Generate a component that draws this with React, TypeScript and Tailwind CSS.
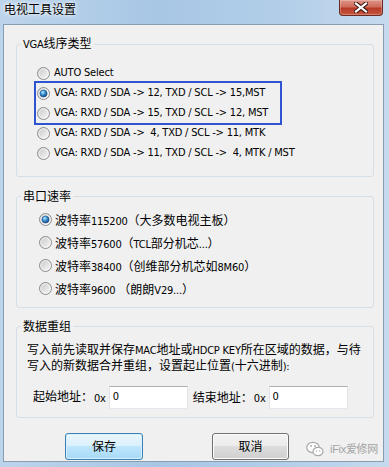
import { useId } from "react";

const CJK = /[\u2e80-\u9fff\u3000-\u303f\uff00-\uffef]/;

// CJK runs at 12px, Latin runs in a narrow Tahoma-like face at 11px
function Mixed({ text }: { text: string }) {
  const parts = text.split(/([\u2e80-\u9fff\u3000-\u303f\uff00-\uffef]+)/);
  return (
    <>
      {parts.map((p, i) =>
        p === "" ? null : CJK.test(p) ? (
          <span key={i} className="text-[12px]">
            {p}
          </span>
        ) : (
          <span
            key={i}
            className="whitespace-pre font-['DejaVu_Sans_Condensed','Liberation_Sans',sans-serif] text-[11px] tracking-[-0.2px]"
          >
            {p}
          </span>
        )
      )}
    </>
  );
}

function Radio({ checked = false }: { checked?: boolean }) {
  const id = useId().replace(/[^a-zA-Z0-9]/g, "");
  return (
    <svg width="13" height="13" viewBox="0 0 13 13" className="shrink-0">
      <defs>
        <linearGradient id={`${id}b`} x1="0" y1="0" x2="1" y2="1">
          <stop offset="0" stopColor="#c4c5c5" />
          <stop offset="1" stopColor="#fbfbfb" />
        </linearGradient>
        <radialGradient id={`${id}d`} cx="0.4" cy="0.35" r="0.7">
          <stop offset="0" stopColor="#bdeeff" />
          <stop offset="0.45" stopColor="#3b92d6" />
          <stop offset="1" stopColor="#0d3a6c" />
        </radialGradient>
      </defs>
      <circle cx="6.5" cy="6.5" r="6" fill={`url(#${id}b)`} stroke="#8b8c8c" />
      <circle cx="6.5" cy="6.5" r="4.7" fill="none" stroke="#f6f6f6" strokeWidth="0.8" />
      {checked && (
        <circle cx="6.5" cy="6.5" r="3.6" fill={`url(#${id}d)`} stroke="#1d4c82" strokeWidth="0.5" />
      )}
    </svg>
  );
}

function Group({
  title,
  className,
  children,
}: {
  title: string;
  className: string;
  children: React.ReactNode;
}) {
  return (
    <fieldset className={`ml-[12px] w-[358px] rounded-[3px] border border-[#d5dfe5] px-0 ${className}`}>
      <legend className="ml-[4px] px-[2px] leading-[16px] text-black">
        <Mixed text={title} />
      </legend>
      {children}
    </fieldset>
  );
}

const vgaItems = [
  "AUTO Select",
  "VGA: RXD / SDA -> 12, TXD / SCL -> 15,MST",
  "VGA: RXD / SDA -> 15, TXD / SCL -> 12, MST",
  "VGA: RXD / SDA ->  4, TXD / SCL -> 11, MTK",
  "VGA: RXD / SDA -> 11, TXD / SCL ->  4, MTK / MST",
];

const baudItems = [
  "波特率115200（大多数电视主板）",
  "波特率57600（TCL部分机芯...）",
  "波特率38400（创维部分机芯如8M60）",
  "波特率9600 （朗朗V29...）",
];

function AddrInput() {
  return (
    <div className="flex h-[23px] w-[79px] items-center border border-[#e2e3ea] border-t-[#abadb3] border-b-[#e3e9ef] bg-white pl-[3px]">
      <Mixed text="0" />
    </div>
  );
}

export default function App() {
  return (
    <div className="relative h-[467px] w-[389px] overflow-hidden bg-[linear-gradient(90deg,#bcd4eb_0%,#a8c7e5_40%,#b1cde8_70%,#c5daee_100%)] font-['Liberation_Sans','Noto_Sans_CJK_SC',sans-serif] text-black">
      {/* title bar */}
      <div className="flex h-[24px] items-start justify-between">
        <div className="pl-[4px] text-[12px] leading-[20px] [text-shadow:0_0_6px_#ffffff,0_0_3px_#ffffff]">
          电视工具设置
        </div>
        <div className="mr-[6px] flex h-[16px] w-[44px] items-center justify-center rounded-b-[4px] border border-t-0 border-[#6b2a20] bg-[linear-gradient(to_bottom,#dd9487_0%,#cf6c5c_45%,#b73a29_55%,#c8573f_100%)] shadow-[inset_0_0_0_1px_rgba(255,255,255,0.25)]">
          <svg width="14" height="11" viewBox="0 0 14 11">
            <path d="M2 1.5 L12 9.5 M12 1.5 L2 9.5" stroke="#3b1711" strokeWidth="4.2" strokeLinecap="square" />
            <path d="M2 1.5 L12 9.5 M12 1.5 L2 9.5" stroke="#ffffff" strokeWidth="2.2" strokeLinecap="square" />
          </svg>
        </div>
      </div>

      {/* client area */}
      <div className="ml-[3px] flex h-[438px] w-[381px] flex-col border border-[#8a9cb0] bg-[#f0f0f0]">
        <Group title="VGA线序类型" className="mt-[10px]">
          <div className="pt-[10px] pb-[13px] pl-[20px]">
            {vgaItems.map((t, i) => (
              <div key={i} className="flex h-[20px] items-center gap-[4px]">
                <Radio checked={i === 1} />
                <Mixed text={t} />
              </div>
            ))}
          </div>
        </Group>

        <Group title="串口速率" className="mt-[11px]">
          <div className="pt-[3px] pb-[7px] pl-[22px]">
            {baudItems.map((t, i) => (
              <div key={i} className="flex h-[23px] items-center gap-[3px]">
                <Radio checked={i === 0} />
                <span>
                  <Mixed text={t} />
                </span>
              </div>
            ))}
          </div>
        </Group>

        <Group title="数据重组" className="mt-[10px]">
          <div className="pt-[7px] pb-[8px]">
            <div className="pl-[10px] leading-[14px]">
              <div>
                <Mixed text="写入前先读取并保存MAC地址或HDCP KEY所在区域的数据，与待" />
              </div>
              <div>
                <Mixed text="写入的新数据合并重组，设置起止位置(十六进制):" />
              </div>
            </div>
            <div className="mt-[11px] flex items-center pl-[16px]">
              <Mixed text="起始地址：" />
              <span className="ml-[1px] mr-[3px]">
                <Mixed text="0x" />
              </span>
              <AddrInput />
              <span className="ml-[5px]">
                <Mixed text="结束地址：" />
              </span>
              <span className="ml-[1px] mr-[3px]">
                <Mixed text="0x" />
              </span>
              <AddrInput />
            </div>
          </div>
        </Group>

        <div className="mt-[15px] flex">
          <button className="ml-[61px] h-[27px] w-[78px] rounded-[3px] border border-[#3c7fb1] bg-[linear-gradient(to_bottom,#eaf6fd_0%,#d9f0fc_50%,#bee6fd_50%,#a7d9f5_100%)] text-[12px] shadow-[inset_0_0_0_1px_#d6f1ff]">
            保存
          </button>
          <button className="ml-[69px] h-[27px] w-[77px] rounded-[3px] border border-[#707070] bg-[linear-gradient(to_bottom,#f2f2f2_0%,#ebebeb_50%,#dddddd_50%,#cfcfcf_100%)] text-[12px] shadow-[inset_0_0_0_1px_#fcfcfc]">
            取消
          </button>
        </div>
      </div>

      {/* annotation box */}
      <div className="absolute left-[34px] top-[81px] h-[44px] w-[248px] border-2 border-[#2e54d2]" />

      {/* watermark */}
      <div className="absolute left-[306px] top-[441px] flex items-center gap-[6px] text-[#a3a3a3]">
        <svg width="18" height="16" viewBox="0 0 18 16">
          <ellipse cx="7" cy="6.5" rx="6.2" ry="5.2" fill="#ffffff" stroke="#a8a8a8" strokeWidth="1.2" />
          <ellipse cx="12" cy="10.5" rx="5" ry="4.2" fill="#ffffff" stroke="#a8a8a8" strokeWidth="1.2" />
          <circle cx="5" cy="5" r="0.9" fill="#a8a8a8" />
          <circle cx="9" cy="5" r="0.9" fill="#a8a8a8" />
          <circle cx="10.5" cy="10" r="0.7" fill="#a8a8a8" />
          <circle cx="13.8" cy="10" r="0.7" fill="#a8a8a8" />
        </svg>
        <span className="text-[11px] tracking-[-0.3px]">iFix爱修网</span>
      </div>
    </div>
  );
}
